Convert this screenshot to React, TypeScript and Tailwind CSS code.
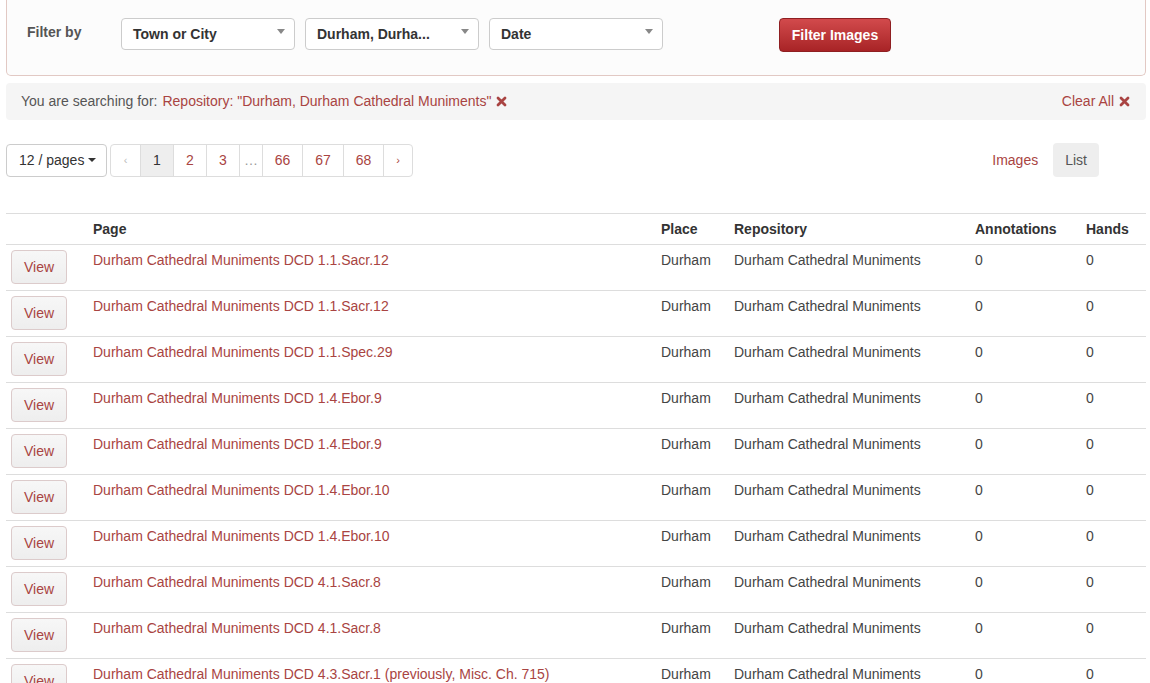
const rows = [
  'Durham Cathedral Muniments DCD 1.1.Sacr.12',
  'Durham Cathedral Muniments DCD 1.1.Sacr.12',
  'Durham Cathedral Muniments DCD 1.1.Spec.29',
  'Durham Cathedral Muniments DCD 1.4.Ebor.9',
  'Durham Cathedral Muniments DCD 1.4.Ebor.9',
  'Durham Cathedral Muniments DCD 1.4.Ebor.10',
  'Durham Cathedral Muniments DCD 1.4.Ebor.10',
  'Durham Cathedral Muniments DCD 4.1.Sacr.8',
  'Durham Cathedral Muniments DCD 4.1.Sacr.8',
  'Durham Cathedral Muniments DCD 4.3.Sacr.1 (previously, Misc. Ch. 715)',
  'Durham Cathedral Muniments DCD 4.3.Sacr.1',
  'Durham Cathedral Muniments DCD 4.3.Sacr.2',
];

function Cross() {
  return (
    <svg width="11" height="11" viewBox="0 0 11 11" className="inline-block">
      <path d="M2 2 L9 9 M9 2 L2 9" stroke="#a94442" strokeWidth="2.8" strokeLinecap="round" />
    </svg>
  );
}

function Select({ label }: { label: string }) {
  return (
    <div className="relative flex h-[32px] w-[174px] items-center rounded-[4px] border border-[#ccc] bg-white pl-[11px] text-[14px] font-bold text-[#333]">
      {label}
      <span className="absolute right-[9px] top-[10px] h-0 w-0 border-x-[4px] border-t-[5px] border-x-transparent border-t-[#888]" />
    </div>
  );
}

const pages = [
  { label: '‹', cls: 'w-[29px] text-[11px] text-[#bbb]' },
  { label: '1', cls: 'w-[33px] bg-[#eee] text-[#333]' },
  { label: '2', cls: 'w-[33px] text-[#a94442]' },
  { label: '3', cls: 'w-[33px] text-[#a94442]' },
  { label: '…', cls: 'w-[23px] text-[#999]' },
  { label: '66', cls: 'w-[40px] text-[#a94442]' },
  { label: '67', cls: 'w-[41px] text-[#a94442]' },
  { label: '68', cls: 'w-[40px] text-[#a94442]' },
  { label: '›', cls: 'w-[29px] text-[11px] text-[#a94442]' },
];

export default function App() {
  return (
    <div className="min-h-[683px] bg-white font-['Liberation_Sans',Arial,sans-serif] text-[14px] text-[#444]">
      <div className="ml-[6px] w-[1140px]">
        <div className="flex h-[76px] items-start rounded-b-[5px] border-x border-b border-[#e2c9c4] bg-[#fcfcfc] pt-[18px]">
          <div className="w-[114px] pl-[20px] pt-[4px] text-[14px] font-bold text-[#555]">Filter by</div>
          <div className="flex gap-[10px]">
            <Select label="Town or City" />
            <Select label="Durham, Durha..." />
            <Select label="Date" />
          </div>
          <button className="ml-[116px] h-[34px] w-[112px] rounded-[4px] border border-[#8f1f22] bg-gradient-to-b from-[#d24a4c] to-[#a82326] text-[14px] font-bold text-white">
            Filter Images
          </button>
        </div>

        <div className="mt-[7px] flex h-[37px] items-center justify-between rounded-[4px] bg-[#f5f5f5] pl-[15px] pr-[16px] text-[#555]">
          <div className="flex items-center gap-[5px]">
            <span>You are searching for:</span>
            <span className="text-[#a94442]">Repository: "Durham, Durham Cathedral Muniments"</span>
            <Cross />
          </div>
          <div className="flex items-center gap-[5px] text-[#a94442]">
            Clear All <Cross />
          </div>
        </div>

        <div className="mt-[23px] flex items-center justify-between">
          <div className="flex h-[33px]">
            <div className="flex w-[101px] items-center gap-[4px] rounded-[4px] border border-[#ccc] pl-[12px] text-[#333]">
              12 / pages
              <span className="h-0 w-0 border-x-[4px] border-t-[4px] border-x-transparent border-t-[#333]" />
            </div>
            <div className="ml-[3px] flex rounded-[4px] border border-[#ddd]">
              {pages.map((p, i) => (
                <div
                  key={i}
                  className={`flex items-center justify-center ${i > 0 ? 'border-l border-[#ddd]' : ''} ${p.cls}`}
                >
                  {p.label}
                </div>
              ))}
            </div>
          </div>
          <div className="mr-[47px] flex h-[34px] items-center">
            <span className="px-[15px] text-[#a94442]">Images</span>
            <span className="flex h-full items-center rounded-[4px] bg-[#eee] px-[12px] text-[#555]">List</span>
          </div>
        </div>

        <table className="mt-[36px] w-full table-fixed border-collapse">
          <colgroup>
            <col className="w-[82px]" />
            <col className="w-[568px]" />
            <col className="w-[73px]" />
            <col className="w-[241px]" />
            <col className="w-[111px]" />
            <col />
          </colgroup>
          <thead>
            <tr className="border-y border-[#ddd] text-left text-[#333]">
              <th className="h-[31px] px-[5px]" />
              <th className="px-[5px] font-bold">Page</th>
              <th className="px-[5px] font-bold">Place</th>
              <th className="px-[5px] font-bold">Repository</th>
              <th className="px-[5px] font-bold">Annotations</th>
              <th className="px-[5px] font-bold">Hands</th>
            </tr>
          </thead>
          <tbody>
            {rows.map((title, i) => (
              <tr key={i} className="h-[46px] border-b border-[#ddd] align-top">
                <td className="px-[5px] pt-[5px]">
                  <button className="h-[34px] w-[56px] rounded-[4px] border border-[#dccbcb] bg-gradient-to-b from-[#f7f7f7] to-[#eee] text-[#a94442]">
                    View
                  </button>
                </td>
                <td className="px-[5px] pt-[5px] leading-[20px] text-[#a94442]">{title}</td>
                <td className="px-[5px] pt-[5px] leading-[20px]">Durham</td>
                <td className="px-[5px] pt-[5px] leading-[20px]">Durham Cathedral Muniments</td>
                <td className="px-[5px] pt-[5px] leading-[20px]">0</td>
                <td className="px-[5px] pt-[5px] leading-[20px]">0</td>
              </tr>
            ))}
          </tbody>
        </table>
      </div>
    </div>
  );
}
